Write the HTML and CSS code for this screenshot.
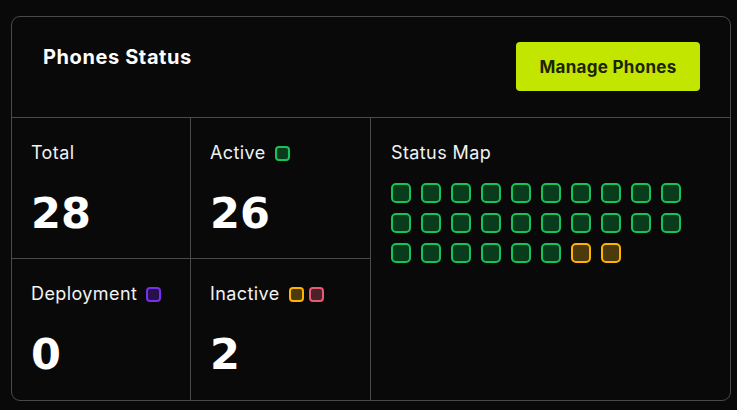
FILE: index.html
```html
<!DOCTYPE html>
<html lang="en">
<head>
    <meta charset="UTF-8">
    <meta name="viewport" content="width=device-width, initial-scale=1.0">
    <title>Phones Status</title>
    <link rel="stylesheet" href="styles.css">
</head>
<body>

    <div class="card">
        <div class="card-header">
            <h2 class="title">Phones Status</h2>
            <button class="manage-btn">Manage Phones</button>
        </div>

        <div class="card-body">
            <div class="stats">
                <div class="stat">
                    <div class="stat-label">Total</div>
                    <div class="stat-value">28</div>
                </div>
                <div class="stat">
                    <div class="stat-label">Active <span class="dot green"></span></div>
                    <div class="stat-value">26</div>
                </div>
                <div class="stat">
                    <div class="stat-label">Deployment <span class="dot purple"></span></div>
                    <div class="stat-value">0</div>
                </div>
                <div class="stat">
                    <div class="stat-label">Inactive <span class="dot yellow"></span><span class="dot pink"></span></div>
                    <div class="stat-value">2</div>
                </div>
            </div>

            <div class="status-map">
                <div class="stat-label">Status Map</div>
                <div class="map-grid" id="mapGrid"></div>
            </div>
        </div>
    </div>

    <script>
        // 26 active phones, 2 inactive
        const grid = document.getElementById('mapGrid');
        for (let i = 0; i < 28; i++) {
            const cell = document.createElement('span');
            cell.className = 'cell ' + (i < 26 ? 'green' : 'yellow');
            grid.appendChild(cell);
        }
    </script>
</body>
</html>
```

FILE: styles.css
```css
/* Page */
body {
    margin: 0;
    padding: 16px 6px 9px 11px;
    background-color: #090909;
    color: #f4f4f4;
    font-family: 'Inter', 'Liberation Sans', sans-serif;
}
/* Card frame */
.card {
    border: 1px solid #4a4a4a;
    border-radius: 9px;
    height: 383px;
    display: flex;
    flex-direction: column;
    overflow: hidden;
}
.card-header {
    display: flex;
    justify-content: space-between;
    align-items: flex-start;
    padding: 25px 30px 0 31px;
    height: 75px;
    border-bottom: 1px solid #4a4a4a;
}
.title {
    margin: 3px 0 0 0;
    font-size: 20px;
    line-height: 24px;
    font-weight: 700;
    letter-spacing: 0.6px;
    color: #ffffff;
}
.manage-btn {
    width: 184px;
    height: 49px;
    border: none;
    border-radius: 4px;
    background-color: #c3e600;
    color: #1c2400;
    font-family: inherit;
    font-size: 17px;
    font-weight: 700;
    letter-spacing: 0.3px;
    cursor: pointer;
}
/* Body: stats on the left, map on the right */
.card-body {
    flex: 1;
    display: flex;
}
.stats {
    width: 358px;
    display: grid;
    grid-template-columns: 179px 179px;
    grid-template-rows: 141px 1fr;
    border-right: 1px solid #4a4a4a;
}
.stat {
    padding: 24px 20px 0 19px;
}
.stat:nth-child(odd) {
    border-right: 1px solid #4a4a4a;
}
.stat:nth-child(-n+2) {
    border-bottom: 1px solid #4a4a4a;
}
.stat-label {
    display: flex;
    align-items: center;
    font-size: 18px;
    line-height: 22px;
    letter-spacing: 0.4px;
    color: #f2f2f2;
}
.stat-value {
    margin-top: 23px;
    font-family: 'DejaVu Sans', sans-serif;
    font-size: 43px;
    line-height: 52px;
    font-weight: 900;
    color: #ffffff;
}
/* Status dots */
.dot {
    display: inline-block;
    width: 11px;
    height: 11px;
    border-width: 2px;
    border-style: solid;
    border-radius: 4px;
    margin-left: 9px;
}
.dot + .dot {
    margin-left: 5px;
}
.green {
    border-color: #17c25a;
    background-color: #093b1d;
}
.purple {
    border-color: #7a2ef2;
    background-color: #26124a;
}
.yellow {
    border-color: #ffb300;
    background-color: #4a3a0c;
}
.pink {
    border-color: #e85a72;
    background-color: #4a2229;
}
/* Status map */
.status-map {
    flex: 1;
    padding: 24px 20px 0 20px;
}
.map-grid {
    display: grid;
    grid-template-columns: repeat(10, 20px);
    gap: 10px;
    margin-top: 19px;
}
.cell {
    display: block;
    width: 16px;
    height: 16px;
    border-width: 2px;
    border-style: solid;
    border-radius: 5px;
}
```
